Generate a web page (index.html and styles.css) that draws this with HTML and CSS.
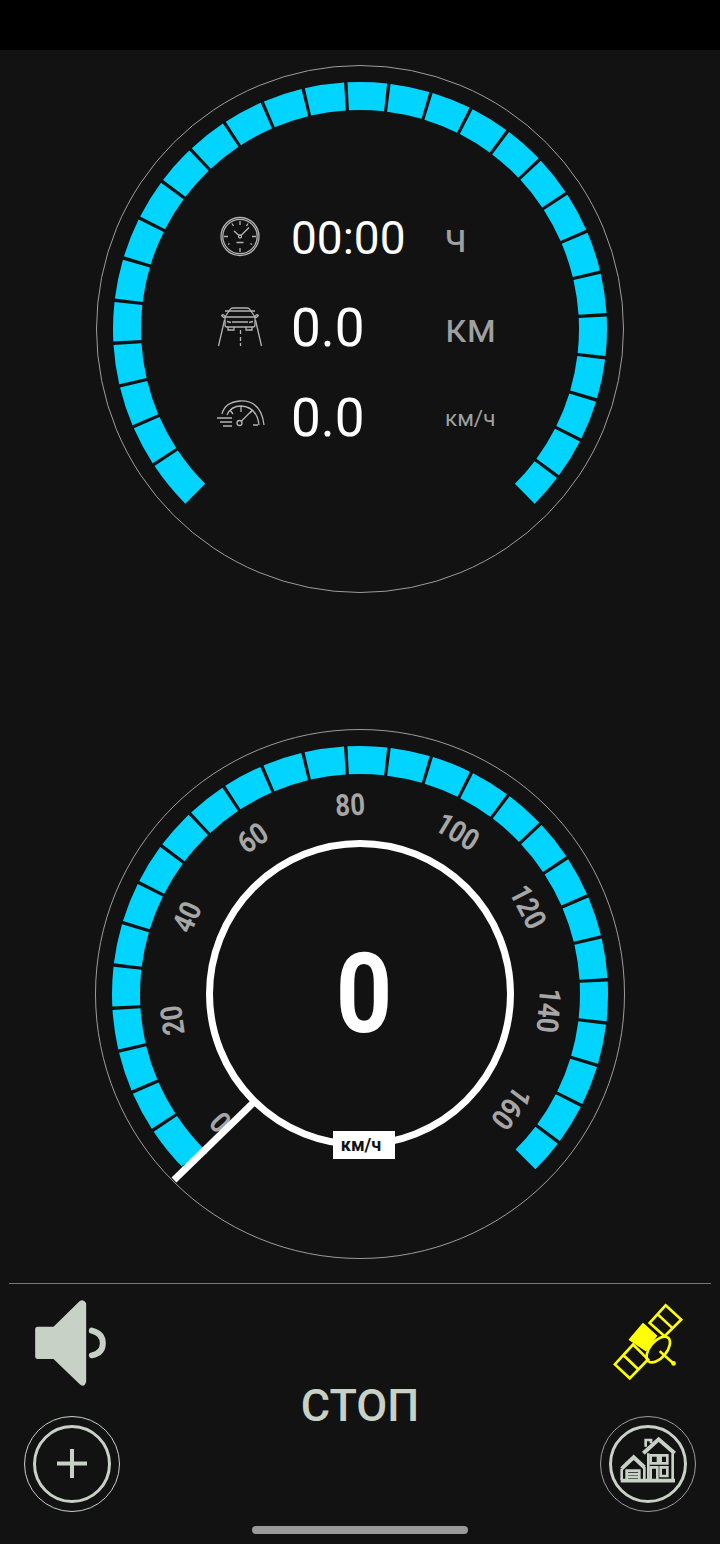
FILE: index.html
```html
<!DOCTYPE html>
<html lang="ru">
<head>
	<meta charset="utf-8">
	<title>Спидометр</title>
	<link rel="stylesheet" href="styles.css">
</head>
<body>
	<div class="status-bar"></div>

	<div class="gauge gauge-trip">
		<svg class="dial" viewBox="-265 -265 530 530">
			<circle class="rim" r="263.5"></circle>
			<circle class="ticks" r="233" pathLength="360" transform="rotate(135)" stroke-dasharray="11.3 .8 9.2 .8 9.2 .8 9.2 .8 9.2 .8 9.2 .8 9.2 .8 9.2 .8 9.2 .8 9.2 .8 9.2 .8 9.2 .8 9.2 .8 9.2 .8 9.2 .8 9.2 .8 9.2 .8 9.2 .8 9.2 .8 9.2 .8 9.2 .8 9.2 .8 9.2 .8 9.2 .8 9.2 .8 9.2 .8 7.9 90"></circle>
		</svg>
		<div class="stats">
			<svg class="stat-icon" viewBox="0 0 60 60">
				<circle cx="30" cy="28.5" r="19"></circle>
				<circle cx="30" cy="28.5" r="17.2"></circle>
				<path d="M30 13v4M30 40v4M14 28.5h4M42 28.5h4M38 15.5l-1.5 2.500M22 15.500l1.500 2.500M18 36.500l1.500-1M42 36.500l-1.500-1"></path>
				<path d="M31 27.500l8-8M29 27.500l-5-4.500M26.500 34.500h7"></path>
				<circle cx="30" cy="28.500" r="1.500"></circle>
			</svg>
			<span class="stat-value">00:00</span>
			<span class="stat-unit">ч</span>

			<svg class="stat-icon" viewBox="0 0 60 60">
				<path d="M15 19l5-7.500q1-1.500 3-1.500h14q2 0 3 1.500l5 7.500"></path>
				<path d="M15 13h30M15 19q-1-3-3-2-1 1 3 3v7q0 2 2 2h26q2 0 2-2v-7q4-2 3-3-2-1-3 2M15 19h30"></path>
				<path d="M18 29v3h6v-3M36 29v3h6v-3M22 24h16M17 23.500l4 1M43 23.500l-4 1"></path>
				<path d="M14.500 22l-6 26M45.500 22l6 26"></path>
				<path d="M30.500 32v4M30.500 39v4M30.500 45v3"></path>
			</svg>
			<span class="stat-value stat-large">0.0</span>
			<span class="stat-unit">км</span>

			<svg class="stat-icon" viewBox="0 0 60 60">
				<path d="M12 26q3-12 18-13 21-1 24 24"></path>
				<path d="M17 27q4-9 14-9 16 1 18 19"></path>
				<path d="M31 18v6M20 22l3 4M42 23l-2 2M48 37h-5"></path>
				<circle cx="29.500" cy="35" r="2.500"></circle>
				<path d="M31.500 33l11-11"></path>
				<path d="M7 30h15M10 34h12M13 38h9"></path>
			</svg>
			<span class="stat-value stat-large">0.0</span>
			<span class="stat-unit stat-unit-small">км/ч</span>
		</div>
	</div>

	<div class="gauge gauge-speed">
		<svg class="dial" viewBox="-265 -265 530 530">
			<circle class="rim" r="264.500"></circle>
			<circle class="ticks" r="234" pathLength="360" transform="rotate(135)" stroke-dasharray="11.3 .8 9.2 .8 9.2 .8 9.2 .8 9.2 .8 9.2 .8 9.2 .8 9.2 .8 9.2 .8 9.2 .8 9.2 .8 9.2 .8 9.2 .8 9.2 .8 9.2 .8 9.2 .8 9.2 .8 9.2 .8 9.2 .8 9.2 .8 9.2 .8 9.2 .8 9.2 .8 9.2 .8 9.2 .8 9.2 .8 7.9 90"></circle>
			<g class="scale">
				<text transform="rotate(-132.600) translate(0 -190) scale(.86 1)" y="11">0</text>
				<text transform="rotate(-98) translate(0 -190) scale(.86 1)" y="11">20</text>
				<text transform="rotate(-66) translate(0 -190) scale(.86 1)" y="11">40</text>
				<text transform="rotate(-34.500) translate(0 -190) scale(.86 1)" y="11">60</text>
				<text transform="rotate(-3) translate(0 -190) scale(.86 1)" y="11">80</text>
				<text transform="rotate(31) translate(0 -190) scale(.86 1)" y="11">100</text>
				<text transform="rotate(62.600) translate(0 -190) scale(.86 1)" y="11">120</text>
				<text transform="rotate(95) translate(0 -190) scale(.86 1)" y="11">140</text>
				<text transform="rotate(127) translate(0 -190) scale(.86 1)" y="11">160</text>
			</g>
			<circle class="hub" r="150.500"></circle>
			<line class="needle" x1="-186" y1="186" x2="-106" y2="108"></line>
		</svg>
		<div class="speed-value">0</div>
		<div class="speed-unit">км/ч</div>
	</div>

	<div class="controls">
		<div class="control-col">
			<svg class="speaker" viewBox="105 60 215 258">
				<path d="M113 140h47l78-76q12-8 20 6v235q-6 20-20 7l-78-75h-47q-8 0-8-8v-81q0-8 8-8z"></path>
				<path class="speaker-wave" d="M275 152q33 8 33 38t-33 36"></path>
			</svg>
			<button class="round-btn">
				<svg viewBox="0 0 72 72">
					<path d="M36 21v29M21 35.500h30"></path>
				</svg>
			</button>
		</div>
		<div class="stop-label">СТОП</div>
		<div class="control-col control-col-right">
			<svg class="satellite" viewBox="100 40 210 235">
				<path d="M258 47l47 43-50 50-45-40zM105 225l45 42 55-57-45-45zM232 72l46 43M132 198l45 43"></path>
				<path class="sat-body" d="M190 105l38 34-30 42-46-31z"></path>
				<ellipse cx="236" cy="180" rx="46" ry="25" transform="rotate(-50 236 180)"></ellipse>
				<path d="M240 185l42 37"></path>
				<circle class="sat-body" cx="282" cy="222" r="3"></circle>
			</svg>
			<button class="round-btn round-btn-dim">
				<svg viewBox="0 0 72 72">
					<g transform="translate(36 36) scale(.3333) translate(-204 -522)">
						<path class="roof" d="M125 536l36-34 32 30M190 490l46-42 48 42"></path>
						<path d="M125 536v34M205 490v80M278 490v80M197 470v-20h16v10"></path>
						<path d="M140 570v-28h38v28M140 552h38M140 561h38M193 530v40"></path>
						<path d="M212 496h22v24h-22zM242 496h20v24h-20zM242 532h20v26h-20zM212 570v-38h20v38"></path>
						<path class="base" d="M122 572h163"></path>
					</g>
				</svg>
			</button>
		</div>
	</div>

	<div class="home-bar"></div>
</body>
</html>
```

FILE: styles.css
```css
* {
	margin: 0;
	padding: 0;
	box-sizing: border-box;
}
body {
	width: 720px;
	height: 1544px;
	overflow: hidden;
	background: #121212;
	font-family: Roboto, "Noto Sans", sans-serif;
}
.status-bar {
	height: 50px;
	background: #000;
}

/* gauges */
.gauge {
	position: relative;
	width: 530px;
	height: 530px;
	margin: 0 auto;
}
.gauge-trip {
	margin-top: 14px;
}
.gauge-speed {
	margin-top: 135px;
}
.dial {
	display: block;
	width: 530px;
	height: 530px;
}
.rim {
	fill: none;
	stroke: #9c9c9c;
	stroke-width: 1;
}
.ticks {
	fill: none;
	stroke: #00d4ff;
	stroke-width: 28;
}
.hub {
	fill: none;
	stroke: #fff;
	stroke-width: 7;
}
.needle {
	stroke: #fff;
	stroke-width: 7;
}
.scale text {
	fill: #a6a6a6;
	font-size: 30px;
	font-weight: 700;
	text-anchor: middle;
}

/* trip stats */
.stats {
	position: absolute;
	top: 129px;
	left: 115px;
	display: grid;
	grid-template-columns: 60px 175px auto;
	grid-auto-rows: 90px;
	align-items: center;
}
.stat-icon {
	width: 60px;
	height: 60px;
	fill: none;
	stroke: #b4b4b4;
	stroke-width: 1.3;
}
.stat-value {
	margin-left: 21px;
	font-size: 46px;
	color: #fff;
}
.stat-large {
	font-size: 53px;
}
.stat-unit {
	font-size: 40px;
	color: #a0a0a0;
}
.stat-unit-small {
	font-size: 22.500px;
}

/* speed readout */
.speed-value {
	position: absolute;
	top: 200px;
	left: 0;
	width: 538px;
	font-size: 112px;
	line-height: 130px;
	font-weight: 700;
	text-align: center;
	color: #fff;
	transform: scaleX(.88);
}
.speed-unit {
	position: absolute;
	top: 402px;
	left: 238px;
	width: 62px;
	height: 28px;
	padding-right: 6px;
	background: #fff;
	color: #121212;
	font-size: 18px;
	font-weight: 700;
	line-height: 28px;
	text-align: center;
}

/* bottom controls */
.controls {
	display: flex;
	justify-content: space-between;
	height: 229px;
	margin: 24px 9px 0;
	padding: 0 15px;
	border-top: 1px solid #777;
}
.control-col {
	display: flex;
	flex-direction: column;
	align-items: flex-start;
	width: 96px;
}
.control-col-right {
	align-items: flex-end;
}
.speaker {
	width: 72px;
	height: 86px;
	margin: 16px 0 30px 11px;
	fill: #c8d1c5;
}
.speaker-wave {
	fill: none;
	stroke: #c8d1c5;
	stroke-width: 18;
	stroke-linecap: round;
}
.satellite {
	width: 70px;
	height: 78px;
	margin: 19px 13px 35px 0;
	fill: none;
	stroke: #ffff00;
	stroke-width: 8;
}
.sat-body {
	fill: #ffff00;
}
.stop-label {
	margin-top: 97px;
	font-size: 45px;
	line-height: 50px;
	font-weight: 500;
	color: #c8d1c5;
}
.round-btn {
	display: block;
	width: 96px;
	height: 96px;
	padding: 7.500px;
	border: 1.500px solid #c8d1c5;
	border-radius: 50%;
	background: none;
}
.round-btn svg {
	display: block;
	width: 78px;
	height: 78px;
	border: 3px solid #c8d1c5;
	border-radius: 50%;
	fill: none;
	stroke: #c8d1c5;
	stroke-width: 4;
}
.round-btn-dim {
	border-color: #9c9c9c;
}
.round-btn-dim path {
	stroke-width: 8;
}
.round-btn-dim .roof {
	stroke-width: 12;
}
.round-btn-dim .base {
	stroke-width: 11;
}
.home-bar {
	width: 216px;
	height: 8px;
	margin: 14px auto 0;
	border-radius: 4px;
	background: #9a9a9a;
}
```
